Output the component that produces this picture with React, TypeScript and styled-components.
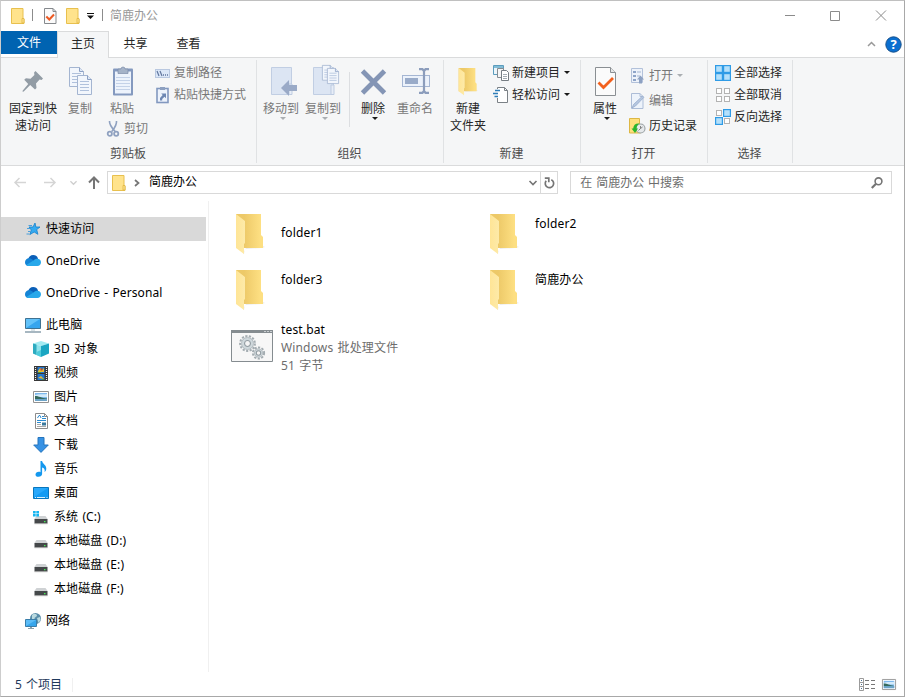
import React from "react";
import styled, { createGlobalStyle } from "styled-components";

const GlobalStyle = createGlobalStyle`
  * { box-sizing: border-box; }
  body { margin: 0; background: #fff; }
  svg { display: block; flex: none; overflow: visible; }
`;

const Window = styled.div`
  width: 905px;
  height: 697px;
  display: flex;
  flex-direction: column;
  overflow: hidden;
  background: #fff;
  border: 1px solid #a8a8a8;
  border-left-color: #cdcdcd;
  border-top-color: #c0c0c0;
  font: 12px/18px "Noto Sans", "Noto Sans CJK SC", sans-serif;
  color: #000;
  white-space: nowrap;
`;

/* ---------- title bar ---------- */

const TitleBar = styled.header`
  height: 30px;
  flex: none;
  display: flex;
  align-items: center;
  padding-left: 10px;
`;

const TitleDivider = styled.span<{ $left: number; $right: number }>`
  width: 1px;
  height: 12px;
  margin: 0 ${(p) => p.$right}px 2px ${(p) => p.$left}px;
  background: #8c8c8c;
`;

const QuickArrow = styled.div`
  margin-left: 8px;
`;

const CheckSlot = styled.div`
  margin-right: 9px;
`;

const Title = styled.span`
  color: #999;
`;

const Captions = styled.div`
  margin-left: auto;
  display: flex;
  align-items: center;
  gap: 35px;
  padding-right: 18px;
  margin-top: -1px;
`;

/* ---------- tabs ---------- */

const TabStrip = styled.nav`
  height: 27px;
  flex: none;
  display: flex;
  align-items: flex-start;
  border-bottom: 1px solid #dadbdc;
`;

const FileTab = styled.div`
  width: 56px;
  height: 23px;
  background: #0063b1;
  color: #fff;
  text-align: center;
  line-height: 24px;
`;

const Tab = styled.div<{ $active?: boolean }>`
  width: ${(p) => (p.$active ? 52 : 53)}px;
  height: 27px;
  text-align: center;
  line-height: ${(p) => (p.$active ? 24 : 26)}px;
  color: #262626;
  border: ${(p) => (p.$active ? "1px solid #dadbdc" : "none")};
  border-bottom: none;
  background: ${(p) => (p.$active ? "#f5f6f7" : "transparent")};
`;

const TabTools = styled.div`
  height: 26px;
  margin-left: auto;
  display: flex;
  align-items: center;
  gap: 9px;
  padding-right: 2px;
`;

/* ---------- ribbon ---------- */

const Ribbon = styled.section`
  height: 108px;
  flex: none;
  display: flex;
  background: #f5f6f7;
  border-bottom: 1px solid #dadbdc;
`;

const Group = styled.div<{ $width: number }>`
  width: ${(p) => p.$width}px;
  height: 103px;
  margin-top: 2px;
  border-right: 1px solid #e0e2e4;
  display: flex;
  flex-direction: column;
`;

const GroupBody = styled.div<{ $left: number }>`
  height: 85px;
  display: flex;
  align-items: flex-start;
  padding-left: ${(p) => p.$left}px;
`;

const GroupLabel = styled.div`
  padding-right: 1px;
  text-align: center;
  color: #4c4c4c;
`;

const BigButton = styled.div<{ $width: number; $disabled?: boolean }>`
  width: ${(p) => p.$width}px;
  padding-top: 5px;
  display: flex;
  flex-direction: column;
  align-items: center;
  line-height: 17px;
  text-align: center;
  color: ${(p) => (p.$disabled ? "#787878" : "#262626")};
`;

const BigIcon = styled.div`
  height: 34px;
  display: flex;
  align-items: center;
  margin-bottom: 1px;
`;

const Column = styled.div<{ $top?: number; $left?: number }>`
  padding-top: ${(p) => p.$top ?? 0}px;
  padding-left: ${(p) => p.$left ?? 0}px;
`;

const SmallButton = styled.div<{ $height?: number; $disabled?: boolean }>`
  height: ${(p) => p.$height ?? 22}px;
  display: flex;
  align-items: center;
  gap: 3px;
  color: ${(p) => (p.$disabled ? "#787878" : "#262626")};
`;

const SmallIcon = styled.span`
  width: 16px;
  height: 16px;
`;

const CutRow = styled(SmallButton)`
  padding-left: 8px;
  margin-top: 1px;
  gap: 1px;
`;

const Arrow = styled.i<{ $light?: boolean; $inline?: boolean }>`
  border: 3px solid transparent;
  border-top-color: ${(p) => (p.$light ? "#aaaeb2" : "#1a1a1a")};
  border-bottom: 0;
  margin: ${(p) => (p.$inline ? "0 0 1px 1px" : "0 0 0 4px")};
`;

const BodyRule = styled.div`
  width: 1px;
  height: 55px;
  margin: 12px 4px 0 5px;
  background: #dcdee1;
`;

/* ---------- address row ---------- */

const AddressRow = styled.div`
  height: 35px;
  flex: none;
  display: flex;
  align-items: flex-start;
  padding: 5px 12px 0 0;
`;

const NavButtons = styled.div`
  width: 106px;
  height: 23px;
  display: flex;
  align-items: center;
  padding-left: 13px;
`;

const NavSlot = styled.div<{ $width: number }>`
  width: ${(p) => p.$width}px;
`;

const Field = styled.div<{ $width: number }>`
  width: ${(p) => p.$width}px;
  height: 23px;
  border: 1px solid #d9d9d9;
  display: flex;
  align-items: center;
`;

const AddressField = styled(Field)`
  padding-left: 4px;
  gap: 9px;
  margin-right: 12px;
`;

const AddressText = styled.span`
  flex: 1;
  margin-top: -1px;
`;

const Refresh = styled.div`
  width: 17px;
  height: 21px;
  margin-left: -7px;
  display: flex;
  align-items: center;
  justify-content: center;
  border-left: 1px solid #d9d9d9;
`;

const SearchField = styled(Field)`
  justify-content: space-between;
  padding: 0 8px 0 9px;
  color: #6d6d6d;
  word-spacing: 0.7px;
`;

/* ---------- body ---------- */

const Main = styled.main`
  flex: 1;
  display: flex;
`;

const Tree = styled.aside`
  width: 208px;
  height: 471px;
  padding-top: 16px;
  border-right: 1px solid #f0f0f0;
`;

const TreeRow = styled.div<{ $child?: boolean; $selected?: boolean; $gap?: boolean }>`
  width: 205px;
  height: 24px;
  display: flex;
  align-items: center;
  gap: 5px;
  padding-left: ${(p) => (p.$child ? 32 : 24)}px;
  margin-top: ${(p) => (p.$gap ? 8 : 0)}px;
  background: ${(p) => (p.$selected ? "#d9d9d9" : "transparent")};
`;

const TreeText = styled.span`
  word-spacing: 1px;
  letter-spacing: 0.1px;
`;

const Files = styled.div`
  flex: 1;
  display: grid;
  grid-template-columns: 254px 254px;
  grid-auto-rows: 56px;
  align-content: start;
  padding: 9px 0 0 18px;
`;

const Tile = styled.div`
  display: flex;
  align-items: flex-start;
  gap: 6px;
`;

const TileIcon = styled.div<{ $wide?: boolean }>`
  width: 48px;
  height: 48px;
  display: flex;
  align-items: center;
  padding-left: ${(p) => (p.$wide ? 4 : 8)}px;
`;

const TileText = styled.div<{ $top: number }>`
  margin-top: ${(p) => p.$top}px;
  word-spacing: 1px;
  letter-spacing: 0.15px;
`;

const Muted = styled.div`
  color: #6d6d6d;
`;

const StatusBar = styled.footer`
  height: 23px;
  flex: none;
  display: flex;
  align-items: center;
  padding: 0 8px 0 14px;
  color: #1e395b;
`;

const StatusText = styled.span`
  padding-right: 10px;
  border-right: 1px solid #f0f0f0;
  line-height: 14px;
  word-spacing: 1px;
`;

const ViewButtons = styled.div`
  margin-left: auto;
  display: flex;
  align-items: center;
  gap: 7px;
  margin-top: -1px;
`;

/* ---------- icons ---------- */

const MiniFolder = () => (
  <svg width="14" height="16" viewBox="0 0 14 16">
    <path d="M.5.5h11.500v10.500h1v4.500H.5z" fill="#ffe38c" stroke="#e8c04e" />
    <path d="M11 15V10.500h2V15z" fill="#ffe596" stroke="#dfb53c" strokeWidth=".8" />
  </svg>
);

const CheckPage = ({ big }: { big?: boolean }) =>
  big ? (
    <svg width="22" height="28" viewBox="0 0 22 28">
      <path d="M1.500-.5h15l5 5v23h-20z" fill="#fbfbfb" stroke="#8a8f93" />
      <path d="M16.500-.5v5h5" fill="#e5e7e8" stroke="#8a8f93" />
      <path d="M4.500 14.500l5 5L19 10" fill="none" stroke="#f2601d" strokeWidth="2.800" />
    </svg>
  ) : (
    <svg width="13" height="16" viewBox="0 0 13 16">
      <path d="M.5.500h8.500l3 3v12H.5z" fill="#fbfbfb" stroke="#85898d" />
      <path d="M9 .5v3h3" fill="none" stroke="#85898d" />
      <path d="M2.300 8.500l3 3 4.700-5" fill="none" stroke="#ec5a24" strokeWidth="2" />
    </svg>
  );

const Pin = () => (
  <svg width="22" height="22" viewBox="0 0 22 22" fill="#929ca5">
    <path d="M13.500 0l7.500 7.500-1.400 1.500-2-.4-3.600 4 .5 4.400-1.500 1.500-4.800-4.500L2 20.300.8 21 .6 19.700l5.600-6.600-4-4.300 1.700-1.500 4.600.4 3.900-3.800-.3-2.400z" />
  </svg>
);

const Sheet = ({ x, y, s = 1 }: { x: number; y: number; s?: number }) => (
  <g transform={`translate(${x} ${y}) scale(${s})`}>
    <path d="M.5.500h10l4 4v15H.5z" fill="#f2f6fc" stroke="#a4b5d1" />
    <path d="M10.500.500v4h4" fill="#dfe8f5" stroke="#8da1c4" />
    <path d="M3 6.500h9M3 9.500h9M3 12.500h9M3 15.500h9" stroke="#b0c1dc" />
  </g>
);

const CopyIcon = () => (
  <svg width="26" height="30" viewBox="0 0 26 30">
    <Sheet x={2} y={0} />
    <Sheet x={10} y={8} />
  </svg>
);

const PasteIcon = () => (
  <svg width="22" height="30" viewBox="0 0 22 30">
    <rect x="2" y="1.500" width="20" height="27" rx="1" fill="#8499bf" />
    <rect x="4" y="4.500" width="16" height="22" fill="#edf3fc" />
    <path d="M7 2h3a2 2 0 014 0h3v4.500H7z" fill="#a5b3c8" stroke="#7d8da9" strokeWidth=".7" />
    <path d="M5 10.500h14M5 13.500h14M5 16.500h14M5 19.500h14M5 22.500h14" stroke="#c4d2e8" />
  </svg>
);

const Scissors = () => (
  <svg width="13" height="16" viewBox="0 0 13 16" fill="none" stroke="#8fa1c0">
    <path d="M2.500 0c-.3 3 1.500 6 5.700 10.500M9.500 0c.3 3-1 6-4.700 10.500" strokeWidth="1.600" />
    <circle cx="2.800" cy="12.700" r="2.100" strokeWidth="1.800" />
    <circle cx="9.200" cy="12.700" r="2.100" strokeWidth="1.800" />
  </svg>
);

const PathIcon = () => (
  <svg width="16" height="16" viewBox="0 0 16 16">
    <rect x=".5" y="4.500" width="14" height="8" fill="#dbe7f8" stroke="#b9c8e0" />
    <path d="M2 6l2 5M5 6l2 5" stroke="#60769e" strokeWidth="1.200" />
    <path d="M8 10h1M10 10h1M12 10h1" stroke="#60769e" strokeWidth="1.300" />
  </svg>
);

const PasteLink = () => (
  <svg width="16" height="16" viewBox="0 0 16 16">
    <rect x="2" y="1.500" width="11" height="14" fill="#edf3fc" stroke="#8298bf" strokeWidth="1.600" />
    <path d="M5 0h5v3H5z" fill="#8da0c0" />
    <path d="M5 13.500V11l2.700-3L6.200 6.500H11v4.800L9.500 9.800 7.200 12v1.500z" fill="#6d87b3" />
  </svg>
);

const MoveIcon = () => (
  <svg width="28" height="30" viewBox="0 0 28 30">
    <path d="M4.500.5h20v27h-20z" fill="#dce5f3" stroke="#c1cee3" />
    <path d="M22 17v10.500h3V17z" fill="#e7edf7" stroke="#bdcbe1" />
    <path d="M14 21l8-8v5h8v6h-8v5z" fill="#9aaac7" />
  </svg>
);

const CopyToIcon = () => (
  <svg width="28" height="32" viewBox="0 0 28 32">
    <path d="M4.500 1.500h20v27h-20z" fill="#dce5f3" stroke="#c1cee3" />
    <path d="M22 19v9.500h3V19z" fill="#e7edf7" stroke="#bdcbe1" />
    <Sheet x={13} y={-1} s={0.78} />
    <Sheet x={18} y={2} s={0.8} />
  </svg>
);

const DeleteIcon = () => (
  <svg width="26" height="26" viewBox="0 0 26 26">
    <path d="M2.500 2l22 22M24.500 2L2.500 24" stroke="#8495b5" strokeWidth="4.800" />
  </svg>
);

const RenameIcon = () => (
  <svg width="28" height="28" viewBox="0 0 28 28">
    <rect x="1.500" y="7.500" width="27" height="11" fill="#ecf2fb" stroke="#a5b6d3" />
    <path d="M4 10h13v6H4z" fill="#99abc9" />
    <path d="M18 1.200h3.500L23 3l1.500-1.800H28M23 2.500v21M18 24.800h3.500L23 23l1.500 1.800H28" fill="none" stroke="#8c9dbc" strokeWidth="2.200" />
  </svg>
);

const Folder = ({ small }: { small?: boolean }) => (
  <svg width={small ? 20 : 30} height={small ? 28 : 41} viewBox="0 0 30 41" preserveAspectRatio="none">
    <defs>
      <linearGradient id="folderBack" x1="0" x2="1">
        <stop offset=".3" stopColor="#edc968" />
        <stop offset=".9" stopColor="#fddf82" />
      </linearGradient>
      <linearGradient id="folderFront" x1="0" x2="1">
        <stop offset="0" stopColor="#ffe596" />
        <stop offset="1" stopColor="#fdeaa9" />
      </linearGradient>
    </defs>
    <path d="M8 39l3-5 17-2 2 1-3 1-17 1-1 5z" fill="#ececec" />
    <path d="M1 0h25v21l2 2v11H1z" fill="url(#folderBack)" />
    <path d="M1 0l9 7v22l-1 1v10l-8-6z" fill="url(#folderFront)" />
  </svg>
);

const NewItem = () => (
  <svg width="16" height="16" viewBox="0 0 16 16">
    <path d="M.5.500h10v9H.5z" fill="#ecf5fa" stroke="#5b9cbd" />
    <path d="M1 1h9v2H1z" fill="#82bcd6" />
    <path d="M4.500 3.500h6v9h-6z" fill="#f6f6f6" stroke="#848b91" />
    <path d="M8.500 5.500h5l2 2v8h-7z" fill="#fff" stroke="#767d83" />
    <path d="M10 9.500h4M10 11.500h4M10 13.500h4" stroke="#a3abb2" />
  </svg>
);

const EasyAccess = () => (
  <svg width="16" height="16" viewBox="0 0 16 16">
    <path d="M4.500.5h7l3 3v12h-10z" fill="#fff" />
    <path d="M4.500 2V.5h7l3 3v12h-10V11" fill="none" stroke="#7b8186" />
    <path d="M11.500.5v3h3" fill="none" stroke="#7b8186" />
    <path d="M2 3.500h5M0 6.500h5M1.500 9.500H5" stroke="#2e7db8" strokeWidth="1.300" />
  </svg>
);

const OpenIcon = () => (
  <svg width="14" height="16" viewBox="0 0 14 16">
    <path d="M1.500.5h11v14h-11z" fill="#edf2fa" stroke="#b2c1da" />
    <path d="M3 3h3v2H3zM3 7h3v2H3zM3 11h3v2H3z" fill="#8ea4c8" />
    <path d="M7 4h4M7 8h3" stroke="#a3b5d1" />
    <path d="M9 15.500v-4H7l3.500-4 3.500 4h-2v4z" fill="#8da1c2" />
  </svg>
);

const EditIcon = () => (
  <svg width="14" height="16" viewBox="0 0 14 16">
    <path d="M1.500.5h8.500l3 3v12H1.500z" fill="#edf3fb" stroke="#adbdd7" />
    <path d="M10 .5v3h3" fill="none" stroke="#adbdd7" />
    <path d="M2 15l1.500-3.500L12.500 3l1.300 1.400L5.500 13z" fill="#b6c7e0" stroke="#90a6c9" strokeWidth=".7" />
  </svg>
);

const HistoryIcon = () => (
  <svg width="17" height="16" viewBox="0 0 17 16">
    <path d="M-.5.500h10v8h1v6.500h-11z" fill="#ffe07c" stroke="#ddb744" />
    <circle cx="10.500" cy="10.500" r="4.500" fill="#e6e9eb" stroke="#9aa1a4" strokeWidth="1.100" />
    <path d="M10.500 10.500V8M10.500 10.500l2-1.500M10.500 10.500l-2 2" stroke="#777" strokeWidth=".9" />
    <path d="M1.500 10.500L5 15l3-4.500H6.500C6.500 8 7.500 7 9.500 5.500 5.500 5 3.500 7 3.200 10.500z" fill="#2cb52c" />
  </svg>
);

const Boxes = ({ on }: { on: number[] }) => (
  <svg width="16" height="16" viewBox="0 0 16 16">
    {[0, 1, 2, 3].map((i) => {
      const lit = on.includes(i);
      const inset = lit ? 0.6 : 1.5;
      return (
        <rect
          key={i}
          x={(i % 2) * 8 + inset}
          y={Math.floor(i / 2) * 8 + inset}
          width={lit ? 6.8 : 5}
          height={lit ? 6.8 : 5}
          fill={lit ? "#b4e0fb" : "#fff"}
          stroke={lit ? "#2f9be6" : "#b3b3b3"}
          strokeWidth={lit ? 1.2 : 1}
        />
      );
    })}
  </svg>
);

const NavArrow = ({ back }: { back?: boolean }) => (
  <svg width="12" height="11" viewBox="0 0 12 11">
    <path d={back ? "M12 5.500H1M5.500 1L1 5.500 5.500 10" : "M0 5.500h11M6.500 1L11 5.500 6.500 10"} fill="none" stroke="#d5d5d5" strokeWidth="1.500" />
  </svg>
);

const UpArrow = () => (
  <svg width="12" height="13" viewBox="0 0 12 13">
    <path d="M6 13V1.500M1 6.500l5-5 5 5" fill="none" stroke="#757575" strokeWidth="2" />
  </svg>
);

const Chevron = ({ color, w = 8, thick = 1.5 }: { color: string; w?: number; thick?: number }) => (
  <svg width={w} height="6" viewBox="0 0 8 6">
    <path d="M.5 1L4 4.500 7.500 1" fill="none" stroke={color} strokeWidth={thick} />
  </svg>
);

const Star = () => (
  <svg width="16" height="16" viewBox="0 0 16 16">
    <path d="M10 2l.9 4H15l-3.300 2.600 1.200 4.700L9.200 11l-4.400 2.600L6.300 9 4 6h4z" fill="#35aaf0" stroke="#1580cb" strokeWidth=".8" />
    <path d="M3.500 4.500H7M2 7.500h3M3 10.500h2.500M1.500 13H4" stroke="#4a9fdc" />
  </svg>
);

const Cloud = () => (
  <svg width="16" height="12" viewBox="0 0 16 12">
    <path d="M3 4.500C3.600 1.800 5.600 0 8.200 0c2.100 0 4 1.200 4.700 3.200L12 8H3z" fill="#0a5fb8" />
    <path d="M3.900 3.200c1.300 0 2.300.5 3.200 1.100L10 7l-7 4C1.200 10.700 0 9.200 0 7.200c0-2.200 1.700-4 3.900-4z" fill="#1484d6" />
    <path d="M12.300 3.700c2.100 0 3.700 1.500 3.700 3.500 0 2.100-1.500 3.800-3.600 3.800H3.600c-.9 0-1.800-.4-2.400-1L8.500 5.400c1-1 2.300-1.700 3.800-1.700z" fill="#28a8ea" />
  </svg>
);

const Screen = () => (
  <svg width="16" height="16" viewBox="0 0 16 16">
    <path d="M.5 1.500h15v10H.5z" fill="#63c2f9" stroke="#3f7292" />
    <path d="M1 11L15 2v9z" fill="#36a5ee" />
    <path d="M6 12h4v2H6z" fill="#d9e3e8" />
    <path d="M0 15h16" stroke="#78909f" strokeWidth="1.300" />
  </svg>
);

const Cube = () => (
  <svg width="16" height="16" viewBox="0 0 16 16">
    <path d="M0 2.500L8 0l8 2.500L8 5z" fill="#a3ebf2" />
    <path d="M0 2.500L8 5v11l-8-3.500z" fill="#8fe3ec" />
    <path d="M16 2.500L8 5v11l8-3.500z" fill="#1aa6c2" />
    <path d="M0 2.500L3.500 3.600v10.400L0 12.500z" fill="#2dabc0" />
    <path d="M3.500 11L8 9v7l-4.500-2z" fill="#4ecbdb" />
  </svg>
);

const Film = () => (
  <svg width="14" height="15" viewBox="0 0 14 15">
    <path d="M0 0h14v15H0z" fill="#373737" />
    <path d="M1.500 1v14M12.500 1v14" stroke="#f0f0f0" strokeWidth="1.200" strokeDasharray="1 1" />
    <path d="M3.500 1h7v6h-7zM3.500 8h7v6h-7z" fill="#2477cf" />
    <path d="M4 5l2-3 2 2 2-2v4H4zM4 12l3-2 3 3z" fill="#e5bc35" />
    <path d="M6.500 2.500h2v2h-2z" fill="#cb4726" />
    <path d="M4 6h3v1H4zM8 13h2v1H8z" fill="#449845" />
  </svg>
);

const Picture = ({ w = 16, h = 12 }: { w?: number; h?: number }) => (
  <svg width={w} height={h} viewBox="0 0 16 12" preserveAspectRatio="none">
    <path d="M.5.500h15v11H.5z" fill="#fff" stroke="#929292" />
    <path d="M2 2h12v8H2z" fill="#7db8ec" />
    <path d="M2 4c4-1.500 8 0 12-1v3H2z" fill="#d3eafa" />
    <path d="M2 5c4 0 6 2 12 2.500V8H2z" fill="#356a5d" />
    <path d="M2 8h12v2H2z" fill="#6da4c8" />
  </svg>
);

const DocIcon = () => (
  <svg width="13" height="16" viewBox="0 0 13 16">
    <path d="M.5.500h9l3 3v12H.5z" fill="#fff" stroke="#8b8b8b" />
    <path d="M9.500.500v3h3" fill="none" stroke="#8b8b8b" />
    <path d="M2.500 5L4 2.500h1L6 5M7 3.500h2M7 5.500h4M2 7.500h9M2 9.500h4" fill="none" stroke="#2b8bd0" />
    <path d="M7 9.500h4v3H7z" fill="#3a789c" />
    <path d="M2 11.500h4M2 13.500h9" stroke="#a8a8a8" />
  </svg>
);

const Download = () => (
  <svg width="16" height="16" viewBox="0 0 16 16">
    <path d="M5 .5h6v7.500h4.300L8 15.400.7 8H5z" fill="#3792e4" stroke="#2474bd" />
  </svg>
);

const Note = () => (
  <svg width="12" height="16" viewBox="0 0 12 16">
    <path d="M5.500 0h1.600c.4 3 4.600 4 4.200 8-.2 1.500-1 2.500-1.800 3 .8-2.500-.4-4-2.400-4.600V13c0 1.600-1.500 2.800-3.600 2.800S.5 15 .5 13.500s1.500-2.700 3.300-2.700c.7 0 1.200.1 1.700.4z" fill="#1498ee" />
  </svg>
);

const Desktop = () => (
  <svg width="16" height="12" viewBox="0 0 16 12">
    <path d="M.5.500h15v11H.5z" fill="#129bf4" stroke="#0876bd" />
    <path d="M1 10V1h14z" fill="#28a8fb" />
    <path d="M2 10.500h1M4 10.500h8M13.500 10.500h1" stroke="#d9f0fc" />
  </svg>
);

const Drive = ({ system }: { system?: boolean }) => (
  <svg width="16" height="16" viewBox="0 0 16 16">
    <path d="M3.500 7h9L15 10.500H1z" fill="#cfd2d4" />
    <rect x="1.500" y="10" width="13" height="4.500" rx=".5" fill="#45484a" />
    <path d="M1.500 14.700h13" stroke="#a5a5a5" strokeWidth=".8" />
    <path d="M11 12h1.500v1.200H11z" fill="#46ec54" />
    {system && <path d="M0 2h2.700v2.400H0zM3.300 2H6v2.400H3.300zM0 5h2.700v2.400H0zM3.300 5H6v2.400H3.300z" fill="#16b5f0" />}
  </svg>
);

const Network = () => (
  <svg width="16" height="16" viewBox="0 0 16 16">
    <circle cx="10.500" cy="5.500" r="5.500" fill="#588ca8" />
    <path d="M7 2c2-2 5-1.500 5 1L9.500 5 10 8 7 6zM12 5l3-1 .5 3-2 3z" fill="#b8d9df" />
    <path d="M.5 6.500h11v7H.5z" fill="#5bbcf7" stroke="#397da9" />
    <path d="M1 13l10-6v6z" fill="#36a5eb" />
    <path d="M3 15.500h6" stroke="#8ba0ab" />
    <path d="M5 14h2v1H5z" fill="#8ba0ab" />
  </svg>
);

const Gear = ({ x, y, r }: { x: number; y: number; r: number }) => (
  <g transform={`translate(${x} ${y})`} fill="none">
    <circle r={r} stroke="#a3acb1" strokeWidth="2" strokeDasharray="2.200 1.400" />
    <circle r={r - 1.4} fill="#cfd8dc" stroke="#aab3b8" strokeWidth=".8" />
    <circle r={r * 0.4} fill="#f5f5f5" stroke="#939da3" strokeWidth="1.100" />
  </g>
);

const BatchFile = () => (
  <svg width="42" height="32" viewBox="0 0 42 32">
    <path d="M.5.500h41v31H.5z" fill="#f7f7f7" stroke="#858c90" />
    <path d="M0 0h42v3H0z" fill="#858c90" />
    <path d="M33 1.500h2M36 1.500h2M39 1.500h2" stroke="#c9cdd0" />
    <Gear x={16.5} y={13.5} r={7.4} />
    <Gear x={27.5} y={23} r={5.6} />
  </svg>
);

const RefreshIcon = () => (
  <svg width="11" height="12" viewBox="0 0 11 12" fill="none" stroke="#757575" strokeWidth="1.700">
    <path d="M7.300 2.700A4.200 4.200 0 11 2.200 3.800" />
    <path d="M.8 1.200h4v4" />
  </svg>
);

const SearchIcon = () => (
  <svg width="12" height="12" viewBox="0 0 12 12" fill="none" stroke="#757575">
    <circle cx="7.500" cy="4.300" r="3.400" strokeWidth="1.600" />
    <path d="M5 6.800L.8 11" strokeWidth="2.200" />
  </svg>
);

const DetailsView = () => (
  <svg width="16" height="13" viewBox="0 0 16 13" fill="none">
    <path d="M.5.500h4v12h-4zM.5 4.500h4M.5 8.500h4" stroke="#9b9b9b" />
    <path d="M2 2.500h1M2 6.500h1M2 10.500h1" stroke="#496f91" />
    <path d="M6 2.500h4M12 2.500h4M6 6.500h4M12 6.500h4M6 10.500h4M12 10.500h4" stroke="#777" />
  </svg>
);

const Help = () => (
  <svg width="17" height="17" viewBox="0 0 17 17">
    <circle cx="8.500" cy="8.500" r="7.700" fill="#0a6fd0" stroke="#17508b" />
    <text x="8.500" y="13" textAnchor="middle" fill="#fff" fontSize="13" fontWeight="700" fontFamily="Noto Sans, sans-serif">?</text>
  </svg>
);

/* ---------- data ---------- */

const tree: { label: string; icon: React.ReactNode; child?: boolean; gap?: boolean; selected?: boolean }[] = [
  { label: "快速访问", icon: <Star />, selected: true },
  { label: "OneDrive", icon: <Cloud />, gap: true },
  { label: "OneDrive - Personal", icon: <Cloud />, gap: true },
  { label: "此电脑", icon: <Screen />, gap: true },
  { label: "3D 对象", icon: <Cube />, child: true },
  { label: "视频", icon: <Film />, child: true },
  { label: "图片", icon: <Picture />, child: true },
  { label: "文档", icon: <DocIcon />, child: true },
  { label: "下载", icon: <Download />, child: true },
  { label: "音乐", icon: <Note />, child: true },
  { label: "桌面", icon: <Desktop />, child: true },
  { label: "系统 (C:)", icon: <Drive system />, child: true },
  { label: "本地磁盘 (D:)", icon: <Drive />, child: true },
  { label: "本地磁盘 (E:)", icon: <Drive />, child: true },
  { label: "本地磁盘 (F:)", icon: <Drive />, child: true },
  { label: "网络", icon: <Network />, gap: true },
];

const TreeIcon = styled.div`
  width: 16px;
  height: 16px;
  display: flex;
  align-items: center;
  justify-content: center;
`;

const folders = [
  { name: "folder1", top: 14 },
  { name: "folder2", top: 5 },
  { name: "folder3", top: 5 },
  { name: "简鹿办公", top: 5 },
];

interface BigProps {
  label: React.ReactNode;
  icon: React.ReactNode;
  width: number;
  disabled?: boolean;
  arrow?: boolean;
}

const Big = ({ label, icon, width, disabled, arrow }: BigProps) => (
  <BigButton $width={width} $disabled={disabled}>
    <BigIcon>{icon}</BigIcon>
    {label}
    {arrow && <Arrow $light={disabled} />}
  </BigButton>
);

interface SmallProps {
  label: string;
  icon: React.ReactNode;
  height?: number;
  disabled?: boolean;
  arrow?: boolean;
}

const Small = ({ label, icon, height, disabled, arrow }: SmallProps) => (
  <SmallButton $height={height} $disabled={disabled}>
    <SmallIcon>{icon}</SmallIcon>
    {label}
    {arrow && <Arrow $light={disabled} $inline />}
  </SmallButton>
);

export default function App() {
  return (
    <>
      <GlobalStyle />
      <Window>
        <TitleBar>
          <MiniFolder />
          <TitleDivider $left={7} $right={11} />
          <CheckSlot>
            <CheckPage />
          </CheckSlot>
          <MiniFolder />
          <QuickArrow>
            <svg width="6" height="6" viewBox="0 0 6 6">
              <path d="M-1 0h7v1h-7zM-1 2.500h7L2.500 6z" fill="#111" />
            </svg>
          </QuickArrow>
          <TitleDivider $left={8} $right={7} />
          <Title>简鹿办公</Title>
          <Captions>
            <svg width="10" height="11" viewBox="0 0 10 11">
              <path d="M0 5.500h10" stroke="#8b8b8b" />
            </svg>
            <svg width="10" height="10" viewBox="0 0 10 10">
              <path d="M.5.500h9v9h-9z" fill="none" stroke="#8b8b8b" />
            </svg>
            <svg width="11" height="11" viewBox="0 0 11 11">
              <path d="M1 .5l10 10M11 .5l-10 10" stroke="#8b8b8b" />
            </svg>
          </Captions>
        </TitleBar>

        <TabStrip>
          <FileTab>文件</FileTab>
          <Tab $active>主页</Tab>
          <Tab>共享</Tab>
          <Tab>查看</Tab>
          <TabTools>
            <svg width="9" height="6" viewBox="0 0 9 6">
              <path d="M1 5l3.500-3.500L8 5" fill="none" stroke="#999" strokeWidth="1.500" />
            </svg>
            <Help />
          </TabTools>
        </TabStrip>

        <Ribbon>
          <Group $width={256}>
            <GroupBody $left={4}>
              <Big width={56} icon={<Pin />} label={<>固定到快<br />速访问</>} />
              <Big width={38} icon={<CopyIcon />} label="复制" disabled />
              <Column>
                <Big width={46} icon={<PasteIcon />} label="粘贴" disabled />
                <CutRow $disabled>
                  <SmallIcon><Scissors /></SmallIcon>
                  剪切
                </CutRow>
              </Column>
              <Column $top={2} $left={7}>
                <Small icon={<PathIcon />} label="复制路径" disabled />
                <Small icon={<PasteLink />} label="粘贴快捷方式" disabled />
              </Column>
            </GroupBody>
            <GroupLabel>剪贴板</GroupLabel>
          </Group>
          <Group $width={187}>
            <GroupBody $left={3}>
              <Big width={42} icon={<MoveIcon />} label="移动到" disabled arrow />
              <Big width={42} icon={<CopyToIcon />} label="复制到" disabled arrow />
              <BodyRule />
              <Big width={38} icon={<DeleteIcon />} label="删除" arrow />
              <Big width={46} icon={<RenameIcon />} label="重命名" disabled />
            </GroupBody>
            <GroupLabel>组织</GroupLabel>
          </Group>
          <Group $width={137}>
            <GroupBody $left={4}>
              <Big width={40} icon={<Folder small />} label={<>新建<br />文件夹</>} />
              <Column $top={2} $left={5}>
                <Small icon={<NewItem />} label="新建项目" arrow />
                <Small icon={<EasyAccess />} label="轻松访问" arrow />
              </Column>
            </GroupBody>
            <GroupLabel>新建</GroupLabel>
          </Group>
          <Group $width={127}>
            <GroupBody $left={4}>
              <Big width={40} icon={<CheckPage big />} label="属性" arrow />
              <Column $top={3} $left={5}>
                <Small height={25} icon={<OpenIcon />} label="打开" disabled arrow />
                <Small height={25} icon={<EditIcon />} label="编辑" disabled />
                <Small height={25} icon={<HistoryIcon />} label="历史记录" />
              </Column>
            </GroupBody>
            <GroupLabel>打开</GroupLabel>
          </Group>
          <Group $width={85}>
            <GroupBody $left={7}>
              <Column $top={2}>
                <Small icon={<Boxes on={[0, 1, 2, 3]} />} label="全部选择" />
                <Small icon={<Boxes on={[]} />} label="全部取消" />
                <Small icon={<Boxes on={[1, 2]} />} label="反向选择" />
              </Column>
            </GroupBody>
            <GroupLabel>选择</GroupLabel>
          </Group>
        </Ribbon>

        <AddressRow>
          <NavButtons>
            <NavSlot $width={30}><NavArrow back /></NavSlot>
            <NavSlot $width={26}><NavArrow /></NavSlot>
            <NavSlot $width={18}><Chevron color="#cfcfcf" w={7} /></NavSlot>
            <UpArrow />
          </NavButtons>
          <AddressField $width={452}>
            <MiniFolder />
            <svg width="5" height="8" viewBox="0 0 5 8">
              <path d="M0 1l3.500 3L0 7" fill="none" stroke="#757575" strokeWidth="1.700" />
            </svg>
            <AddressText>简鹿办公</AddressText>
            <Chevron color="#757575" w={10} thick={1.6} />
            <Refresh><RefreshIcon /></Refresh>
          </AddressField>
          <SearchField $width={322}>
            <span>在 简鹿办公 中搜索</span>
            <SearchIcon />
          </SearchField>
        </AddressRow>

        <Main>
          <Tree>
            {tree.map((t) => (
              <TreeRow key={t.label} $child={t.child} $gap={t.gap} $selected={t.selected}>
                <TreeIcon>{t.icon}</TreeIcon>
                <TreeText>{t.label}</TreeText>
              </TreeRow>
            ))}
          </Tree>
          <Files>
            {folders.map((f) => (
              <Tile key={f.name}>
                <TileIcon><Folder /></TileIcon>
                <TileText $top={f.top}>{f.name}</TileText>
              </Tile>
            ))}
            <Tile>
              <TileIcon $wide><BatchFile /></TileIcon>
              <TileText $top={-1}>
                <div>test.bat</div>
                <Muted>Windows 批处理文件</Muted>
                <Muted>51 字节</Muted>
              </TileText>
            </Tile>
          </Files>
        </Main>

        <StatusBar>
          <StatusText>5 个项目</StatusText>
          <ViewButtons>
            <DetailsView />
            <Picture w={14} h={11} />
          </ViewButtons>
        </StatusBar>
      </Window>
    </>
  );
}
